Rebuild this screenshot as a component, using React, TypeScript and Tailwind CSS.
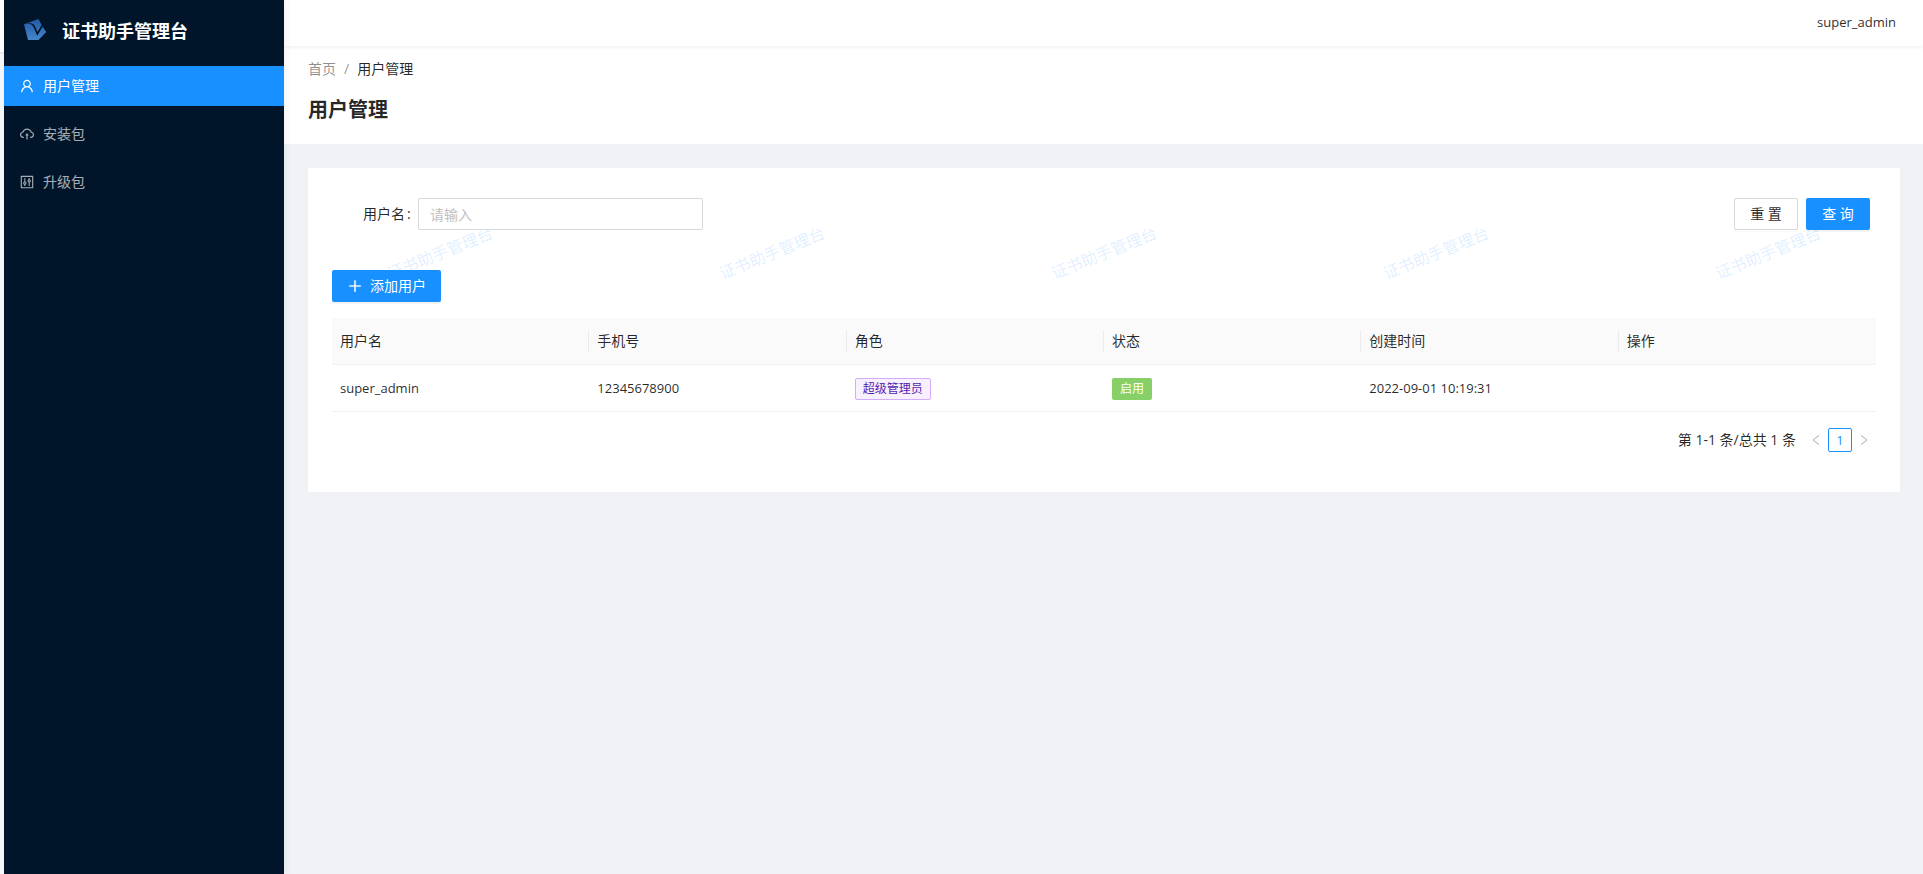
import { useState } from 'react';

import type { IconType } from 'react-icons';
import {
  AiOutlineCloudUpload,
  AiOutlineControl,
  AiOutlineLeft,
  AiOutlinePlus,
  AiOutlineRight,
  AiOutlineUser,
} from 'react-icons/ai';

interface MenuItem {
  key: string;
  label: string;
  icon: IconType;
}

interface User {
  username: string;
  phone: string;
  role: string;
  status: string;
  createdAt: string;
}

const APP_TITLE = '证书助手管理台';

const MENU: MenuItem[] = [
  { key: 'users', label: '用户管理', icon: AiOutlineUser },
  { key: 'packages', label: '安装包', icon: AiOutlineCloudUpload },
  { key: 'upgrades', label: '升级包', icon: AiOutlineControl },
];

const COLUMNS = ['用户名', '手机号', '角色', '状态', '创建时间', '操作'];

const USERS: User[] = [
  {
    username: 'super_admin',
    phone: '12345678900',
    role: '超级管理员',
    status: '启用',
    createdAt: '2022-09-01 10:19:31',
  },
];

const Logo = () => (
  <svg className="h-8 w-8" viewBox="0 0 32 32" aria-hidden="true">
    <defs>
      <linearGradient id="logo-fill" x1="0" y1="0" x2="0" y2="1">
        <stop offset="0" stopColor="#2459a5" />
        <stop offset="1" stopColor="#4486cc" />
      </linearGradient>
    </defs>
    <path d="M4 9.2L18.5 4L22.2 11L26.2 17L18.5 25H8Z" fill="url(#logo-fill)" />
    <path
      d="M6.5 8.8C11 8.4 12.6 9.8 14 13L17.2 20.8L23 11L22 9.6L17.4 17L15.4 12C14 8.6 11 7.6 6.5 8.8Z"
      fill="#001529"
    />
  </svg>
);

const Sidebar = () => {
  const [active, setActive] = useState('users');

  return (
    <aside className="relative z-20 w-70 shrink-0 bg-[#001529] text-white shadow-[2px_0_8px_rgba(29,35,41,0.05)]">
      <div className="flex items-center gap-2.5 px-4 pt-[15px] pb-[19px]">
        <Logo />
        <h1 className="text-lg leading-8 font-bold">{APP_TITLE}</h1>
      </div>
      <nav className="flex flex-col gap-2">
        {MENU.map(({ key, label, icon: Icon }) => (
          <a
            key={key}
            href={`#${key}`}
            onClick={() => setActive(key)}
            className={`flex h-10 items-center gap-2 px-[15px] ${
              active === key ? 'bg-[#1890ff] text-white' : 'text-white/65'
            }`}
          >
            <Icon className="h-4 w-4" />
            {label}
          </a>
        ))}
      </nav>
    </aside>
  );
};

/* 水印 */
const Watermark = () => (
  <div
    className="pointer-events-none absolute inset-0 flex overflow-hidden pt-[73px] pl-[76px] select-none"
    aria-hidden="true"
  >
    {Array.from({ length: 5 }, (_, i) => (
      <div key={i} className="w-[332px] shrink-0">
        <span className="inline-block -rotate-22 text-base leading-6 text-[#1890ff]/15">
          {APP_TITLE}
        </span>
      </div>
    ))}
  </div>
);

const UserTable = () => (
  <table className="w-full table-fixed border-collapse text-left">
    <thead>
      <tr className="border-b border-[#f0f0f0] bg-[#fafafa]">
        {COLUMNS.map((column) => (
          <th
            key={column}
            className="group py-3 font-normal"
          >
            <div className="flex h-[22px] items-center border-r border-black/6 px-2 group-last:border-r-0">
              {column}
            </div>
          </th>
        ))}
      </tr>
    </thead>
    <tbody>
      {USERS.map((user) => (
        <tr key={user.username} className="h-[47px] border-b border-[#f0f0f0]">
          <td className="px-2 text-[13px]">{user.username}</td>
          <td className="px-2 text-[13px]">{user.phone}</td>
          <td className="px-2">
            <span className="inline-block rounded-xs border border-[#d3adf7] bg-[#f9f0ff] px-[7px] align-middle text-xs leading-5 text-[#531dab]">
              {user.role}
            </span>
          </td>
          <td className="px-2">
            <span className="inline-block rounded-xs bg-[#87d068] px-2 align-middle text-xs leading-[22px] text-white">
              {user.status}
            </span>
          </td>
          <td className="px-2 text-[13px]">{user.createdAt}</td>
          <td className="px-2" />
        </tr>
      ))}
    </tbody>
  </table>
);

const Pagination = () => (
  <div className="mt-4 flex h-6 items-center justify-end">
    <span className="mr-2">第 1-1 条/总共 1 条</span>
    <button
      type="button"
      disabled
      aria-label="上一页"
      className="flex h-6 w-6 items-center justify-center text-black/25"
    >
      <AiOutlineLeft className="h-3.5 w-3.5" />
    </button>
    <button
      type="button"
      className="h-6 w-6 rounded-xs border border-[#1890ff] text-[13px] leading-5 text-[#1890ff]"
    >
      1
    </button>
    <button
      type="button"
      disabled
      aria-label="下一页"
      className="flex h-6 w-6 items-center justify-center text-black/25"
    >
      <AiOutlineRight className="h-3.5 w-3.5" />
    </button>
  </div>
);

const UserPanel = () => {
  const [keyword, setKeyword] = useState('');

  return (
    <section className="relative my-6 mr-[23px] ml-6 rounded-xs bg-white px-6 pt-[30px] pb-10">
      <Watermark />
      <div className="relative">
        {/* 搜索 */}
        <form
          className="flex items-center pr-1.5 pl-[31px]"
          onSubmit={(e) => e.preventDefault()}
        >
          <label htmlFor="username" className="flex w-[55px] gap-0.5 whitespace-nowrap">
            用户名<span>:</span>
          </label>
          <input
            id="username"
            type="text"
            placeholder="请输入"
            value={keyword}
            onChange={(e) => setKeyword(e.target.value)}
            className="h-8 w-[285px] rounded-xs border border-[#d9d9d9] bg-white px-[11px] outline-none placeholder:text-[#bfbfbf] focus:border-[#40a9ff]"
          />
          <div className="ml-auto flex gap-2">
            <button
              type="button"
              onClick={() => setKeyword('')}
              className="h-8 w-16 rounded-xs border border-[#d9d9d9] bg-white shadow-[0_2px_0_rgba(0,0,0,0.016)]"
            >
              重 置
            </button>
            <button
              type="submit"
              className="h-8 w-16 rounded-xs bg-[#1890ff] text-white shadow-[0_2px_0_rgba(0,0,0,0.043)]"
            >
              查 询
            </button>
          </div>
        </form>

        {/* 工具栏 */}
        <div className="pt-10 pb-4">
          <button
            type="button"
            className="flex h-8 items-center gap-[7px] rounded-xs bg-[#1890ff] px-[15px] text-white shadow-[0_2px_0_rgba(0,0,0,0.043)]"
          >
            <AiOutlinePlus className="h-4 w-4" strokeWidth={24} />
            添加用户
          </button>
        </div>

        <UserTable />
        <Pagination />
      </div>
    </section>
  );
};

const App = () => (
  <div className="flex min-h-screen bg-[#f0f2f5] font-['Open_Sans','Noto_Sans_CJK_SC',sans-serif] text-sm leading-[22px] text-black/85">
    <div className="w-1 shrink-0 bg-[#f5f7fa]">
      <div className="h-13 bg-white shadow-[0_1px_2px_rgba(0,21,41,0.12)]" />
    </div>
    <Sidebar />
    <main className="min-w-0 flex-1">
      <header className="relative z-10 flex h-[46px] items-center justify-end bg-white px-[27px] pb-0.5 text-[13px] shadow-[0_1px_4px_rgba(0,21,41,0.08)]">
        super_admin
      </header>

      <div className="bg-white px-6 pt-3 pb-[18px]">
        <nav className="flex gap-2 text-black/45" aria-label="面包屑">
          <a href="#home">首页</a>
          <span>/</span>
          <span className="text-black/85">用户管理</span>
        </nav>
        <h2 className="mt-3.5 text-xl leading-8 font-bold">用户管理</h2>
      </div>

      <UserPanel />
    </main>
  </div>
);

export default App;
